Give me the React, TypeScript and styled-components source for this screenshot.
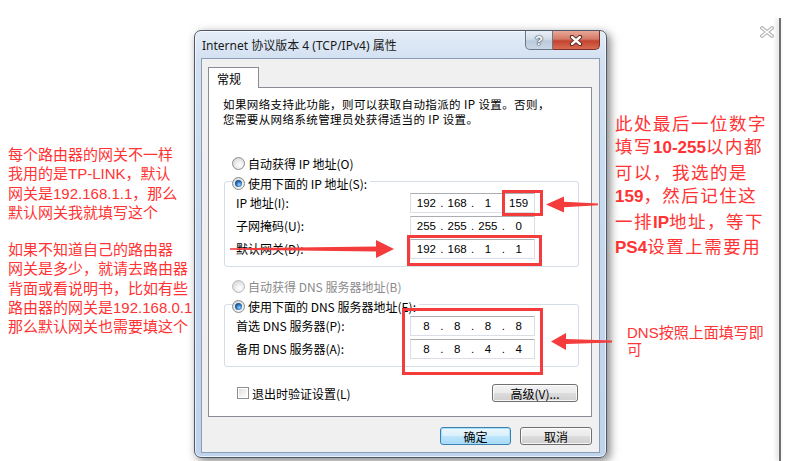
import React from 'react';
import styled, { createGlobalStyle, css } from 'styled-components';

const RED = '#f43c3c';
const NOTE_RED = '#ff3333';

const GlobalStyle = createGlobalStyle`
  html, body {
    margin: 0;
    padding: 0;
    background: #fff;
  }
  body {
    width: 785px;
    height: 461px;
    overflow: hidden;
  }
`;

const Page = styled.div`
  position: relative;
  display: flex;
  width: 785px;
  height: 461px;
  background: #fff;
  overflow: hidden;
`;

/* ---------- side notes ---------- */

const LeftNotes = styled.div`
  flex: 0 0 194px;
  box-sizing: border-box;
  padding: 145px 0 0 8px;
  font-family: 'Liberation Sans', 'Noto Sans CJK SC', sans-serif;
  font-size: 15px;
  line-height: 19.3px;
  color: ${NOTE_RED};
  white-space: nowrap;
`;

const NoteLine = styled.div``;

const NoteGap = styled.div`
  height: 18px;
`;

const RightArea = styled.div`
  flex: 1;
  display: flex;
  min-width: 0;
`;

const RightNotes = styled.div`
  flex: 1;
  display: flex;
  flex-direction: column;
  padding-left: 8px;
  white-space: nowrap;
  color: ${NOTE_RED};
`;

const PageClose = styled.svg`
  align-self: flex-end;
  margin: 26px 5px 0 0;
`;

const BigNote = styled.div`
  margin-top: 73px;
  font-family: 'Noto Sans CJK SC', sans-serif;
  font-size: 17.5px;
  letter-spacing: 1.5px;
  line-height: 23.4px;
`;

const Strong = styled.b`
  font-family: 'Liberation Sans', sans-serif;
  font-weight: 700;
  font-size: 17px;
  letter-spacing: 0;
`;

const SmallNote = styled.div`
  margin: 65px 0 0 12px;
  font-family: 'Liberation Sans', 'Noto Sans CJK SC', sans-serif;
  font-size: 15px;
  line-height: 17px;
`;

const Rail = styled.div`
  flex: 0 0 2px;
  margin: 18px 4px 0 0;
  background: #6f6f6f;
  box-shadow: -2px 0 4px rgba(0, 0, 0, 0.22);
`;

/* ---------- dialog frame ---------- */

const Dialog = styled.div`
  position: relative;
  z-index: 1;
  flex: 0 0 413px;
  height: 428px;
  margin-top: 30px;
  box-sizing: border-box;
  display: flex;
  flex-direction: column;
  padding: 0 6px 4px 6px;
  border: 1px solid #4d5868;
  border-radius: 7px;
  background: linear-gradient(to bottom, #e4edf8 0%, #d2e0f1 30px, #c5d7ee 60%, #bfd3ec 100%);
  box-shadow: 3px 3px 10px rgba(0, 0, 0, 0.5), inset 0 0 0 1px rgba(255, 255, 255, 0.65);
  font-family: 'Noto Sans CJK SC', sans-serif;
  font-size: 12px;
  color: #000;
`;

const TitleBar = styled.div`
  display: flex;
  align-items: flex-start;
  height: 27px;
  padding-left: 1px;
`;

const Title = styled.div`
  flex: 1;
  align-self: center;
  font-family: 'Noto Sans', 'Noto Sans CJK SC', sans-serif;
  font-size: 12px;
  color: #1a1a1a;
  white-space: nowrap;
`;

const CaptionButton = styled.div<{ $close?: boolean }>`
  display: flex;
  align-items: center;
  justify-content: center;
  box-sizing: border-box;
  height: 19px;
  border: 1px solid #6b7888;
  border-top: none;
  ${p =>
    p.$close
      ? css`
          width: 47px;
          border-color: #7a3128;
          border-left: none;
          border-radius: 0 0 5px 0;
          background: linear-gradient(to bottom, #e8a898 0%, #d47a68 45%, #c4432d 55%, #d86c52 100%);
        `
      : css`
          width: 28px;
          border-radius: 0 0 0 5px;
          background: linear-gradient(to bottom, #e9eff6 0%, #d3dde9 45%, #bccbdc 55%, #c9d6e5 100%);
          color: #fff;
          font-family: 'Liberation Sans', sans-serif;
          font-weight: 700;
          font-size: 13px;
          text-shadow: 0 0 1px #3a4655, 0 0 1px #3a4655, 0 0 2px #3a4655;
        `}
`;

const ContentArea = styled.div`
  flex: 1;
  display: flex;
  flex-direction: column;
  padding: 8px 7px 0 6px;
  border: 1px solid #8a9db5;
  background: #f0f0f0;
`;

const TabStrip = styled.div`
  display: flex;
  height: 20px;
`;

const Tab = styled.div`
  position: relative;
  z-index: 1;
  box-sizing: border-box;
  width: 51px;
  height: 21px;
  padding: 2px 0 0 8px;
  border: 1px solid #898c95;
  border-bottom: none;
  background: #fff;
  font-size: 12px;
`;

const Panel = styled.div`
  box-sizing: border-box;
  height: 330px;
  display: flex;
  flex-direction: column;
  border: 1px solid #898c95;
  background: #fff;
`;

const Description = styled.div`
  margin: 9px 0 0 14px;
  font-size: 11.5px;
  letter-spacing: 0.4px;
  line-height: 15px;
  white-space: nowrap;
`;

const DescLine = styled.div``;

const OptionRow = styled.div<{ $disabled?: boolean }>`
  display: flex;
  align-items: center;
  gap: 3px;
  height: 16px;
  margin-left: 23px;
  white-space: nowrap;
  color: ${p => (p.$disabled ? '#8a8a8a' : '#000')};
`;

const Radio = styled.span<{ $checked?: boolean; $disabled?: boolean }>`
  position: relative;
  box-sizing: border-box;
  width: 13px;
  height: 13px;
  border-radius: 50%;
  border: 1px solid ${p => (p.$disabled ? '#b8b8b8' : '#8a8b8c')};
  background: radial-gradient(circle at 60% 65%, #ffffff 0%, #e6e6e6 55%, #cdcdcd 100%);
  ${p =>
    p.$checked &&
    css`
      &::after {
        content: '';
        position: absolute;
        left: 2px;
        top: 2px;
        width: 7px;
        height: 7px;
        border-radius: 50%;
        background: radial-gradient(circle at 60% 65%, #9cd4fb 0%, #2a6fb8 45%, #0b2a56 100%);
      }
    `}
`;

const Group = styled.div<{ $top: number }>`
  margin: ${p => p.$top}px 12px 0 15px;
  padding: 0 43px 6px 11px;
  border: 1px solid #d5dde6;
  border-radius: 3px;
`;

const Legend = styled(OptionRow)`
  width: fit-content;
  margin: -7px 0 0 -4px;
  padding-right: 3px;
  background: #fff;
`;

const FieldRow = styled.div`
  display: flex;
  align-items: center;
  height: 23px;
`;

const FieldLabel = styled.div`
  flex: 1;
  white-space: nowrap;
`;

const AddressBox = styled.div`
  display: flex;
  align-items: center;
  box-sizing: border-box;
  width: 125px;
  height: 20px;
  padding: 0 2px;
  border: 1px solid #dadfe5;
  border-top-color: #abadb3;
  font-family: 'Liberation Sans', sans-serif;
  font-size: 11.5px;
`;

const Octet = styled.span`
  flex: 1;
  text-align: center;
`;

const Dot = styled.span`
  width: 4px;
  text-align: center;
`;

const FooterRow = styled.div`
  display: flex;
  align-items: center;
  justify-content: space-between;
  height: 18px;
  margin-top: 17px;
  padding: 0 13px 0 28px;
`;

const CheckLabel = styled.label`
  display: flex;
  align-items: center;
  gap: 3px;
`;

const CheckBox = styled.span`
  box-sizing: border-box;
  width: 12px;
  height: 12px;
  border: 1px solid #8e8f8f;
  background: linear-gradient(135deg, #dcdcdc 0%, #f4f4f4 60%, #ffffff 100%);
  box-shadow: inset 0 0 0 1px #fff;
`;

const PushButton = styled.div<{ $width: number; $default?: boolean }>`
  display: flex;
  align-items: center;
  justify-content: center;
  box-sizing: border-box;
  width: ${p => p.$width}px;
  height: 18px;
  border: 1px solid #707070;
  border-radius: 3px;
  background: linear-gradient(to bottom, #f2f2f2 0%, #ebebeb 50%, #dddddd 51%, #cfcfcf 100%);
  box-shadow: inset 0 0 0 1px rgba(255, 255, 255, 0.8);
  font-size: 12px;
  ${p =>
    p.$default &&
    css`
      border-color: #3c7fb1;
      background: linear-gradient(to bottom, #eaf6fd 0%, #d9f0fc 50%, #bee6fd 51%, #a7d9f5 100%);
      box-shadow: inset 0 0 0 1px #a6e0fa;
    `}
`;

const ButtonRow = styled.div`
  display: flex;
  justify-content: flex-end;
  gap: 9px;
  margin-top: 10px;
`;

const Annotations = styled.svg`
  position: absolute;
  left: 0;
  top: 0;
  z-index: 2;
  pointer-events: none;
`;

const ipRows = [
  { label: 'IP 地址(I):', value: ['192', '168', '1', '159'] },
  { label: '子网掩码(U):', value: ['255', '255', '255', '0'] },
  { label: '默认网关(D):', value: ['192', '168', '1', '1'] },
];

const dnsRows = [
  { label: '首选 DNS 服务器(P):', value: ['8', '8', '8', '8'] },
  { label: '备用 DNS 服务器(A):', value: ['8', '8', '4', '4'] },
];

const Address: React.FC<{ value: string[] }> = ({ value }) => (
  <AddressBox>
    {value.map((part, i) => (
      <React.Fragment key={i}>
        {i > 0 && <Dot>.</Dot>}
        <Octet>{part}</Octet>
      </React.Fragment>
    ))}
  </AddressBox>
);

const App: React.FC = () => (
  <Page>
    <GlobalStyle />

    <LeftNotes>
      <NoteLine>每个路由器的网关不一样</NoteLine>
      <NoteLine>我用的是TP-LINK，默认</NoteLine>
      <NoteLine>网关是192.168.1.1，那么</NoteLine>
      <NoteLine>默认网关我就填写这个</NoteLine>
      <NoteGap />
      <NoteLine>如果不知道自己的路由器</NoteLine>
      <NoteLine>网关是多少，就请去路由器</NoteLine>
      <NoteLine>背面或看说明书，比如有些</NoteLine>
      <NoteLine>路由器的网关是192.168.0.1</NoteLine>
      <NoteLine>那么默认网关也需要填这个</NoteLine>
    </LeftNotes>

    <Dialog>
      <TitleBar>
        <Title>Internet 协议版本 4 (TCP/IPv4) 属性</Title>
        <CaptionButton>?</CaptionButton>
        <CaptionButton $close>
          <svg width="14" height="11" viewBox="0 0 14 11">
            <path d="M3 2 L11 9 M11 2 L3 9" stroke="#4a1a12" strokeWidth="4.2" strokeLinecap="round" />
            <path d="M3 2 L11 9 M11 2 L3 9" stroke="#fff" strokeWidth="2.4" strokeLinecap="round" />
          </svg>
        </CaptionButton>
      </TitleBar>

      <ContentArea>
        <TabStrip>
          <Tab>常规</Tab>
        </TabStrip>
        <Panel>
          <Description>
            <DescLine>如果网络支持此功能，则可以获取自动指派的 IP 设置。否则，</DescLine>
            <DescLine>您需要从网络系统管理员处获得适当的 IP 设置。</DescLine>
          </Description>

          <OptionRow style={{ marginTop: 28 }}>
            <Radio />
            自动获得 IP 地址(O)
          </OptionRow>
          <Group $top={10}>
            <Legend>
              <Radio $checked />
              使用下面的 IP 地址(S):
            </Legend>
            {ipRows.map(row => (
              <FieldRow key={row.label}>
                <FieldLabel>{row.label}</FieldLabel>
                <Address value={row.value} />
              </FieldRow>
            ))}
          </Group>

          <OptionRow $disabled style={{ marginTop: 11 }}>
            <Radio $disabled />
            自动获得 DNS 服务器地址(B)
          </OptionRow>
          <Group $top={10}>
            <Legend>
              <Radio $checked />
              使用下面的 DNS 服务器地址(E):
            </Legend>
            {dnsRows.map(row => (
              <FieldRow key={row.label}>
                <FieldLabel>{row.label}</FieldLabel>
                <Address value={row.value} />
              </FieldRow>
            ))}
          </Group>

          <FooterRow>
            <CheckLabel>
              <CheckBox />
              退出时验证设置(L)
            </CheckLabel>
            <PushButton $width={86}>高级(V)...</PushButton>
          </FooterRow>
        </Panel>

        <ButtonRow>
          <PushButton $width={71} $default>
            确定
          </PushButton>
          <PushButton $width={72}>取消</PushButton>
        </ButtonRow>
      </ContentArea>
    </Dialog>

    <RightArea>
      <RightNotes>
        <PageClose width="14" height="12" viewBox="0 0 14 12">
          <path d="M2 2 L12 10 M12 2 L2 10" stroke="#b4b4b4" strokeWidth="3.6" strokeLinecap="square" />
          <path d="M2 2 L12 10 M12 2 L2 10" stroke="#fff" strokeWidth="1.6" strokeLinecap="square" />
        </PageClose>
        <BigNote>
          <div>此处最后一位数字</div>
          <div>
            填写<Strong>10-255</Strong>以内都
          </div>
          <div>可以，我选的是</div>
          <div>
            <Strong>159</Strong>，然后记住这
          </div>
          <div>
            一排<Strong>IP</Strong>地址，等下
          </div>
          <div>
            <Strong>PS4</Strong>设置上需要用
          </div>
        </BigNote>
        <SmallNote>
          <div>DNS按照上面填写即</div>
          <div>可</div>
        </SmallNote>
      </RightNotes>
      <Rail />
    </RightArea>

    <Annotations width="785" height="461" viewBox="0 0 785 461">
      <g fill="none" stroke={RED} strokeWidth="3">
        <rect x="503.5" y="191.5" width="38" height="23" />
        <rect x="408.5" y="236.5" width="132" height="28" />
        <rect x="403.5" y="309.5" width="138" height="64" />
      </g>
      <g fill={RED}>
        <polygon points="230,248.2 376,246.6 376,240 394,249 376,258 376,251.4 230,249.8" />
        <polygon points="598,203.4 564,201.8 564,196.5 546,204.5 564,212.5 564,207.2 598,205.2" />
        <polygon points="612,340.6 566,339 566,333 551,341.5 566,350 566,344 612,342.4" />
      </g>
    </Annotations>
  </Page>
);

export default App;
